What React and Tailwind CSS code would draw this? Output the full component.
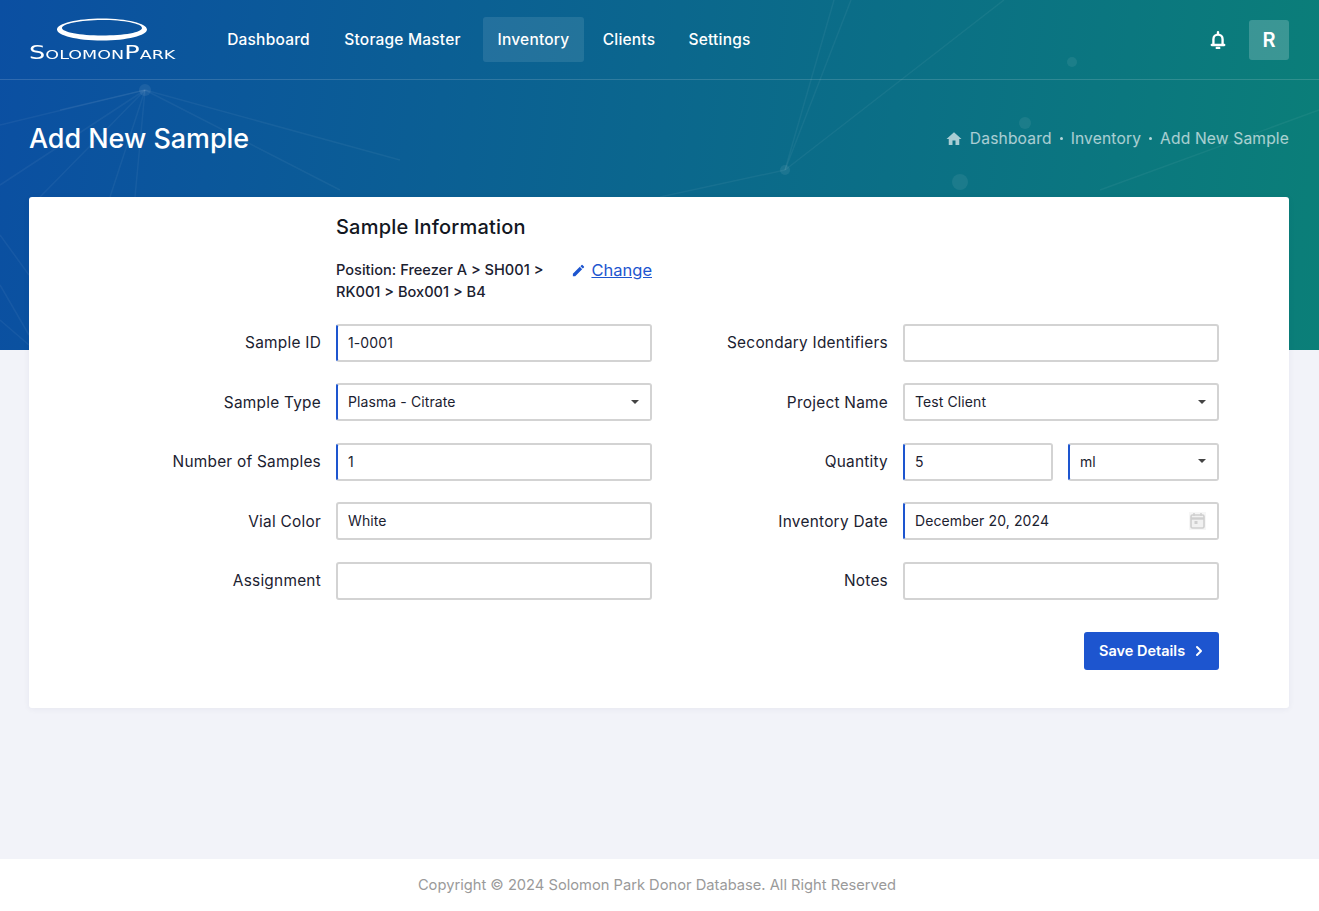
import React from "react";
import { MdHome, MdEdit } from "react-icons/md";
import { ChevronRight } from "lucide-react";

const font = { fontFamily: "Inter, sans-serif" };

function Network() {
  // faint network lines in the hero background
  const lines = [
    [145, 90, 0, 125], [145, 90, 0, 185], [145, 90, 40, 197], [145, 90, 110, 197], [145, 90, 135, 197],
    [145, 90, 340, 190], [145, 90, 400, 160], [145, 90, 60, 110],
    [0, 235, 29, 275], [0, 285, 29, 335], [0, 320, 29, 345],
    [785, 170, 1004, 0], [785, 170, 851, 0], [785, 170, 834, 0], [785, 170, 660, 197],
    [1100, 190, 1319, 110],
  ];
  return (
    <svg className="absolute inset-0 w-full h-full pointer-events-none blur-[0.6px]" viewBox="0 0 1319 350" preserveAspectRatio="none">
      <g stroke="#ffffff" strokeOpacity="0.05" strokeWidth="1.5" fill="none">
        {lines.map(([x1, y1, x2, y2], i) => (
          <line key={i} x1={x1} y1={y1} x2={x2} y2={y2} />
        ))}
      </g>
      <g fill="#ffffff" fillOpacity="0.07">
        <circle cx="145" cy="90" r="6" />
        <circle cx="785" cy="170" r="5" />
        <circle cx="1025" cy="123" r="6" />
        <circle cx="960" cy="182" r="8" />
        <circle cx="1072" cy="62" r="5" />
      </g>
    </svg>
  );
}

function Logo() {
  return (
    <div className="w-[146px] flex flex-col items-center">
      <svg width="92" height="23" viewBox="0 0 92 23">
        <path
          fillRule="evenodd"
          fill="#ffffff"
          d="M1 11.5C1 5.5 21 .5 46 .5s45 5 45 11-20 11-45 11S1 17.5 1 11.5ZM6 10c0 4 18 7.5 40 7.5s40-3 40-7.5S68 2 46 2 6 6 6 10Z"
        />
      </svg>
      <div className="mt-[2px] text-white text-[19px] leading-[18px] whitespace-nowrap font-normal" style={{ fontFamily: "'DejaVu Sans', sans-serif", fontVariant: "small-caps" }}>
        <span className="inline-block scale-x-[1.35]">SolomonPark</span>
      </div>
    </div>
  );
}

function Field({ label, value, accent, select, date, children }) {
  return (
    <>
      <label className="text-right text-[15.4px] tracking-[0.25px] text-[#1b2130] self-center">{label}</label>
      {children || <Box value={value} accent={accent} select={select} date={date} />}
    </>
  );
}

function Box({ value, accent, select, date }) {
  return (
    <div className={`relative h-[38px] rounded-[3px] border-2 border-[#d3d3d3] bg-white flex items-center pl-[10px] pr-[11px] pb-[1px] text-[14px] tracking-[0.1px] text-[#1b2130] ${accent ? "border-l-[#1d55cf]" : ""}`}>
      <span>{value}</span>
      {select && <span className="ml-auto w-0 h-0 border-x-[4.5px] border-x-transparent border-t-[4.5px] border-t-[#444]" />}
      {date && (
        <svg className="ml-auto" width="17" height="18" viewBox="0 0 17 18" fill="none">
          <rect x="0" y="0" width="17" height="18" fill="#f6f6f6" />
          <rect x="2" y="3" width="13" height="13" rx="1.5" stroke="#cfcfcf" strokeWidth="1.6" fill="#f1f1f1" />
          <path d="M2 6.5h13" stroke="#cfcfcf" strokeWidth="2.4" />
          <path d="M5 1v3M12 1v3" stroke="#cfcfcf" strokeWidth="1.5" />
          <rect x="5.5" y="9" width="3" height="3" fill="#cfcfcf" />
        </svg>
      )}
    </div>
  );
}

export default function App() {
  const nav = [
    { label: "Dashboard", cls: "w-[115px]" },
    { label: "Storage Master", cls: "w-[145px]" },
    { label: "Inventory", cls: "w-[101px] ml-[4px] bg-white/10" },
    { label: "Clients", cls: "w-[82px]" },
    { label: "Settings", cls: "w-[91px]" },
  ];
  return (
    <div className="min-h-[911px] flex flex-col bg-[#f2f3f9]" style={font}>
      <div className="relative h-[350px] bg-[linear-gradient(97deg,#0b4fa2,#0b7f78)] overflow-hidden">
        <Network />
        <div className="relative h-[80px] border-b border-white/15 flex items-center pl-[29px] pr-[30px]">
          <Logo />
          <nav className="ml-[36px] flex items-center gap-[4px]">
            {nav.map((n) => (
              <a key={n.label} className={`h-[45px] flex items-center justify-center rounded-[3px] text-white text-[15.5px] font-medium tracking-[0.2px] ${n.cls}`}>
                {n.label}
              </a>
            ))}
          </nav>
          <div className="ml-auto flex items-center gap-[21px]">
            <svg width="20" height="20" viewBox="0 0 24 24" fill="none" stroke="#ffffff" strokeWidth="2.8" strokeLinejoin="round">
              <path d="M6.5 17.5V11a5.5 5.5 0 0 1 11 0v6.5" />
              <path d="M4.5 18h15" strokeLinecap="round" />
              <path d="M12 2.5v2" strokeLinecap="round" />
              <path d="M10.5 21.5h3" strokeLinecap="round" />
            </svg>
            <div className="w-10 h-10 rounded-[3px] bg-white/20 flex items-center justify-center text-white text-[20px] font-semibold">R</div>
          </div>
        </div>
        <div className="relative h-[117px] flex items-center justify-between pl-[29px] pr-[30px] pt-[1px]">
          <h1 className="-mt-[2px] text-white text-[26.9px] font-medium">Add New Sample</h1>
          <div className="flex items-center text-[15.6px] tracking-[0.15px] text-white/65">
            <MdHome className="text-[18px] mr-[7px]" />
            <span>Dashboard</span>
            <span className="mx-[8px] w-[3px] h-[3px] rounded-full bg-white/70" />
            <span>Inventory</span>
            <span className="mx-[8px] w-[3px] h-[3px] rounded-full bg-white/70" />
            <span>Add New Sample</span>
          </div>
        </div>
      </div>

      <main className="flex-1 -mt-[153px] relative pl-[29px] pr-[30px]">
        <div className="h-[511px] bg-white rounded-[3px] shadow-[0_1px_6px_rgba(30,40,80,0.06)]">
          <div className="pl-[307px] pt-[16px]">
            <h2 className="text-[20px] leading-[28px] tracking-[0.2px] font-medium text-[#131722]">Sample Information</h2>
            <div className="mt-[18px] flex w-[316px] justify-between">
              <div className="w-[225px] text-[14.6px] leading-[22px] font-medium text-[#1b2130]">
                Position: Freezer A &gt; SH001 &gt; RK001 &gt; Box001 &gt; B4
              </div>
              <a className="flex items-start gap-[5px] text-[16.5px] leading-[22px] text-[#1d55cf] underline">
                <MdEdit className="text-[15px] mt-[4px]" />
                Change
              </a>
            </div>
          </div>
          <div className="mt-[20.75px] grid grid-cols-[292px_316px_221px_316px] gap-x-[15px] gap-y-[21.5px]">
            <Field label="Sample ID" value="1-0001" accent />
            <Field label="Secondary Identifiers" value="" />
            <Field label="Sample Type" value="Plasma - Citrate" accent select />
            <Field label="Project Name" value="Test Client" select />
            <Field label="Number of Samples" value="1" accent />
            <Field label="Quantity">
              <div className="grid grid-cols-[150px_151px] gap-x-[15px]">
                <Box value="5" accent />
                <Box value="ml" accent select />
              </div>
            </Field>
            <Field label="Vial Color" value="White" />
            <Field label="Inventory Date" value="December 20, 2024" accent date />
            <Field label="Assignment" value="" />
            <Field label="Notes" value="" />
          </div>
          <div className="mt-[32.25px] pr-[70px] flex justify-end">
            <button className="h-[38px] w-[135px] rounded-[3px] bg-[#1d55cf] text-white text-[14.5px] font-semibold flex items-center pl-[15px] gap-[6px]">
              Save Details
              <ChevronRight size={16} strokeWidth={3} />
            </button>
          </div>
        </div>
      </main>

      <footer className="h-[52px] bg-white flex items-center justify-center pr-[5px] text-[14.7px] text-[#9a9a9a]">
        Copyright © 2024 Solomon Park Donor Database. All Right Reserved
      </footer>
    </div>
  );
}
